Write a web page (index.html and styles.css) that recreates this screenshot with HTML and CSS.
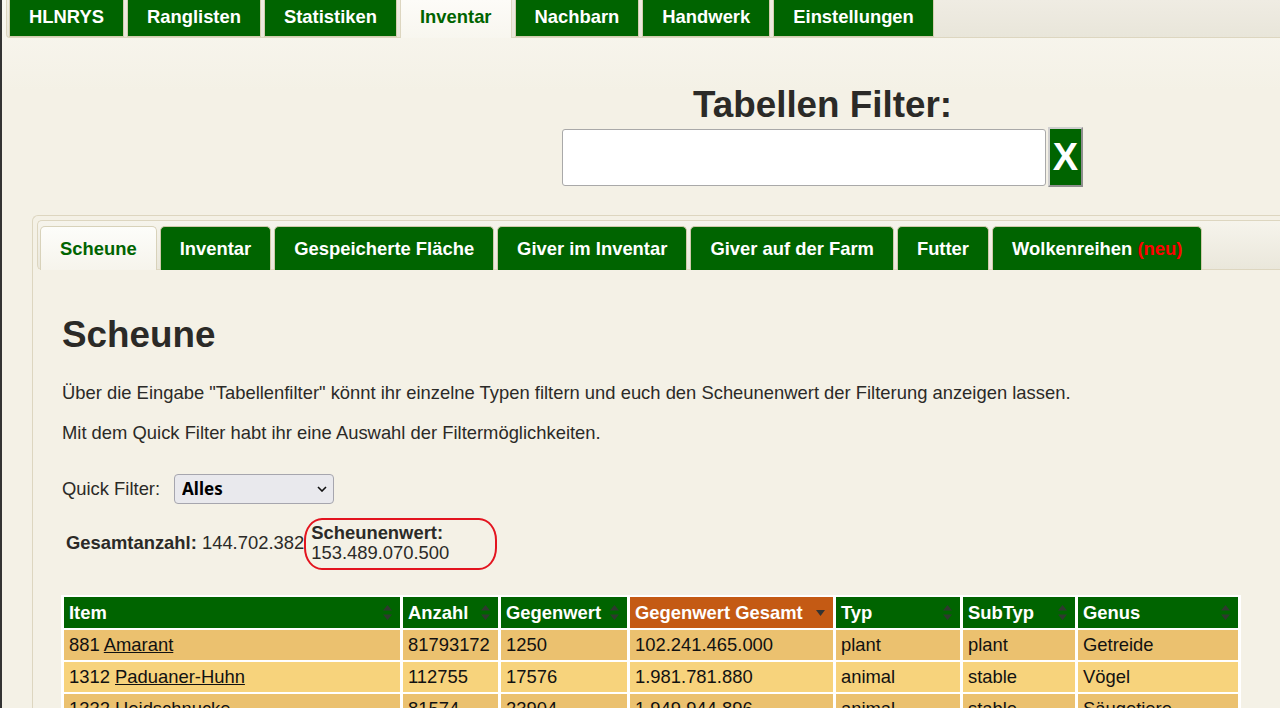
FILE: index.html
```html
<!DOCTYPE html>
<html lang="de">
<head>
<meta charset="utf-8">
<title>Inventar - Scheune</title>
<link rel="stylesheet" href="styles.css">
</head>
<body>
<nav class="topnav">
  <a class="ttab" href="#">HLNRYS</a>
  <a class="ttab" href="#">Ranglisten</a>
  <a class="ttab" href="#">Statistiken</a>
  <a class="ttab active" href="#">Inventar</a>
  <a class="ttab" href="#">Nachbarn</a>
  <a class="ttab" href="#">Handwerk</a>
  <a class="ttab" href="#">Einstellungen</a>
</nav>

<section class="filter">
  <h2 class="filter-title">Tabellen Filter:</h2>
  <div class="filter-row">
    <input class="filter-input" type="text">
    <button class="filter-clear" type="button">X</button>
  </div>
</section>

<div class="panel">
  <ul class="subnav">
    <li class="stab active">Scheune</li>
    <li class="stab">Inventar</li>
    <li class="stab">Gespeicherte Fläche</li>
    <li class="stab">Giver im Inventar</li>
    <li class="stab">Giver auf der Farm</li>
    <li class="stab">Futter</li>
    <li class="stab">Wolkenreihen <span class="new">(neu)</span></li>
  </ul>

  <div class="content">
    <h1 class="title">Scheune</h1>
    <p class="text">Über die Eingabe "Tabellenfilter" könnt ihr einzelne Typen filtern und euch den Scheunenwert der Filterung anzeigen lassen.</p>
    <p class="text">Mit dem Quick Filter habt ihr eine Auswahl der Filtermöglichkeiten.</p>

    <div class="quick">
      <label class="quick-label">Quick Filter:</label>
      <div class="select-wrap">
        <select class="select"><option>Alles</option></select>
        <svg class="chev" width="10" height="6" viewBox="0 0 10 6"><polyline points="1,1 5,5 9,1" fill="none" stroke="#111" stroke-width="1.6"/></svg>
      </div>
    </div>

    <div class="summary">
      <div class="total"><b>Gesamtanzahl:</b> 144.702.382</div>
      <div class="worth"><b>Scheunenwert:</b><br>153.489.070.500</div>
    </div>

    <table class="grid">
      <colgroup>
        <col class="c-item"><col class="c-anz"><col class="c-geg"><col class="c-gg"><col class="c-typ"><col class="c-sub"><col class="c-gen">
      </colgroup>
      <thead>
        <tr>
          <th>Item<svg class="sort" width="9" height="15" viewBox="0 0 9 15"><path d="M4.5 0L9 5.5H0Z M0 9.5H9L4.5 15Z"/></svg></th>
          <th>Anzahl<svg class="sort" width="9" height="15" viewBox="0 0 9 15"><path d="M4.5 0L9 5.5H0Z M0 9.5H9L4.5 15Z"/></svg></th>
          <th>Gegenwert<svg class="sort" width="9" height="15" viewBox="0 0 9 15"><path d="M4.5 0L9 5.5H0Z M0 9.5H9L4.5 15Z"/></svg></th>
          <th class="sorted">Gegenwert Gesamt<svg class="sort desc" width="9" height="6" viewBox="0 0 9 6"><path d="M0 0H9L4.5 6Z"/></svg></th>
          <th>Typ<svg class="sort" width="9" height="15" viewBox="0 0 9 15"><path d="M4.5 0L9 5.5H0Z M0 9.5H9L4.5 15Z"/></svg></th>
          <th>SubTyp<svg class="sort" width="9" height="15" viewBox="0 0 9 15"><path d="M4.5 0L9 5.5H0Z M0 9.5H9L4.5 15Z"/></svg></th>
          <th>Genus<svg class="sort" width="9" height="15" viewBox="0 0 9 15"><path d="M4.5 0L9 5.5H0Z M0 9.5H9L4.5 15Z"/></svg></th>
        </tr>
      </thead>
      <tbody>
        <tr>
          <td>881 <a href="#">Amarant</a></td><td>81793172</td><td>1250</td><td>102.241.465.000</td><td>plant</td><td>plant</td><td>Getreide</td>
        </tr>
        <tr>
          <td>1312 <a href="#">Paduaner-Huhn</a></td><td>112755</td><td>17576</td><td>1.981.781.880</td><td>animal</td><td>stable</td><td>Vögel</td>
        </tr>
        <tr>
          <td>1332 <a href="#">Heidschnucke</a></td><td>81574</td><td>23904</td><td>1.949.944.896</td><td>animal</td><td>stable</td><td>Säugetiere</td>
        </tr>
      </tbody>
    </table>
  </div>
</div>
</body>
</html>
```

FILE: styles.css
```css
html {
  overflow: hidden;
  background: #f4f1e6;
}

body {
  margin: 0;
  height: 708px;
  overflow: hidden;
  box-sizing: border-box;
  border-left: 2px solid #333;
  font-family: "Liberation Sans", Arial, sans-serif;
  font-size: 18.4px;
  color: #2b2a27;
  background: linear-gradient(#f9f7f0 0, #f4f1e6 90px);
}

/* ---------- top navigation ---------- */
.topnav {
  display: flex;
  align-items: flex-start;
  height: 37px;
  margin-left: 4px;
  padding-left: 2px;
  border-left: 1px solid #ddd6c0;
  border-bottom: 1px solid #ddd6c0;
  border-bottom-left-radius: 4px;
  background: linear-gradient(#efece3, #e9e6da);
}

.ttab {
  box-sizing: border-box;
  height: 37px;
  margin-right: 3px;
  padding: 6px 19px 0;
  line-height: 21px;
  border: 1px solid #d3cdaf;
  border-top: none;
  background: #006400;
  color: #fff;
  font-weight: bold;
  text-decoration: none;
}

.ttab.active {
  height: 38px;
  margin-bottom: -1px;
  border-color: #ddd6c0;
  border-bottom: none;
  background: linear-gradient(#fdfcf8, #f8f6ef);
  color: #006400;
}

/* ---------- table filter ---------- */
.filter {
  width: 521px;
  margin: 46px 0 0 560px;
}

.filter-title {
  margin: 0 0 1px;
  text-align: center;
  font-size: 36.8px;
  font-weight: bold;
  line-height: normal;
  color: #2b2a27;
}

.filter-row {
  display: flex;
  align-items: center;
  gap: 2px;
}

.filter-input {
  box-sizing: border-box;
  width: 484px;
  height: 57px;
  margin: 0;
  border: 1px solid #a9a9a9;
  border-radius: 3px;
  background: #fff;
}

.filter-clear {
  box-sizing: border-box;
  width: 35px;
  height: 60px;
  margin: 0;
  padding: 0;
  border: 2px solid;
  border-color: #cfcfcf #8e8e8e #8e8e8e #cfcfcf;
  background: #006400;
  color: #fff;
  font-family: "Liberation Sans", Arial, sans-serif;
  font-weight: bold;
  font-size: 38px;
  line-height: 1;
}

/* ---------- panel with sub tabs ---------- */
.panel {
  margin: 28px 0 0 30px;
  padding: 4px 0 0 4px;
  border: 1px solid #ddd6c0;
  border-right: none;
  border-bottom: none;
  border-radius: 6px 0 0 0;
}

.subnav {
  display: flex;
  align-items: flex-start;
  height: 43px;
  margin: 0;
  padding: 5px 0 0 2px;
  list-style: none;
  border: 1px solid #ddd6c0;
  border-right: none;
  border-radius: 5px 0 0 5px;
  background: linear-gradient(#f6f4ec, #eae7db);
}

.stab {
  box-sizing: border-box;
  height: 44px;
  margin-right: 3px;
  padding: 11px 19px 0;
  line-height: 21px;
  border: 1px solid #cfc9aa;
  border-bottom: none;
  border-radius: 5px 5px 0 0;
  background: #006400;
  color: #fff;
  font-weight: bold;
  white-space: nowrap;
}

.stab.active {
  border-color: #d8d2ba;
  background: linear-gradient(#fdfdfa, #f6f4ec);
  color: #006400;
}

.new {
  color: #f00;
}

/* ---------- content ---------- */
.content {
  padding: 20px 0 0 25px;
}

.title {
  margin: 23.6px 0 26px;
  font-size: 36.8px;
  font-weight: bold;
  line-height: normal;
  color: #2b2a27;
}

.text {
  margin: 19px 0;
  line-height: 21px;
}

.quick {
  display: flex;
  align-items: center;
  gap: 14px;
  margin-top: 31px;
}

.select-wrap {
  position: relative;
  width: 160px;
  height: 30px;
}

.select {
  appearance: none;
  -webkit-appearance: none;
  box-sizing: border-box;
  width: 160px;
  height: 30px;
  margin: 0;
  padding: 0 0 0 7px;
  border: 1px solid #a6a6ae;
  border-radius: 4px;
  background: #e9e9ed;
  color: #000;
  font-family: "Noto Sans", "Open Sans", sans-serif;
  font-weight: bold;
  font-size: 17px;
}

.chev {
  position: absolute;
  right: 7px;
  top: 12px;
  pointer-events: none;
}

.summary {
  display: flex;
  align-items: center;
  margin-top: 19px;
}

.total {
  padding: 0 7px 0 4px;
  line-height: 21px;
}

.worth {
  position: relative;
  line-height: 20px;
}

.worth::after {
  content: "";
  position: absolute;
  left: -7px;
  top: -5px;
  width: 193px;
  height: 52px;
  box-sizing: border-box;
  border: 2.5px solid #e3141f;
  border-radius: 18px / 22px;
}

/* ---------- data table ---------- */
.grid {
  width: 1180px;
  margin-top: 32px;
  margin-left: -1px;
  table-layout: fixed;
  border-collapse: separate;
  border-spacing: 3px 2px;
  background: #fff;
  color: #111;
}

.c-item { width: 336px; }
.c-anz { width: 95px; }
.c-geg { width: 126px; }
.c-gg { width: 203px; }
.c-typ { width: 124px; }
.c-sub { width: 112px; }
.c-gen { width: 160px; }

.grid th {
  position: relative;
  padding: 5px 18px 5px 5px;
  line-height: 21px;
  text-align: left;
  background: #006400;
  color: #fff;
  font-weight: bold;
  white-space: nowrap;
}

.grid th.sorted {
  background: #c45a14;
}

.sort {
  position: absolute;
  right: 8px;
  top: 8px;
  fill: #2e3a2e;
}

.sort.desc {
  top: 13px;
  fill: #333;
}

.grid td {
  padding: 4px 4px 5px 5px;
  line-height: 21px;
  white-space: nowrap;
  overflow: hidden;
}

.grid tbody tr:nth-child(odd) td {
  background: #ebc16f;
}

.grid tbody tr:nth-child(even) td {
  background: #f7d37c;
}

.grid a {
  color: inherit;
  text-decoration: underline;
}
```
